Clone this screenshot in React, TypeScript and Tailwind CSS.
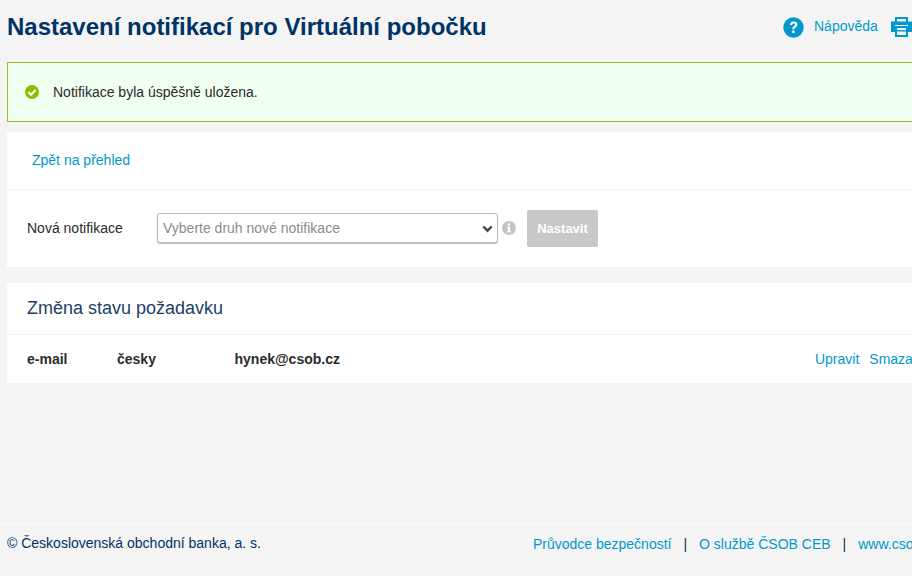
import React from 'react';

const QuestionIcon = () => (
  <svg width="21" height="21" viewBox="0 0 21 21" className="shrink-0">
    <circle cx="10.5" cy="10.5" r="10.2" fill="#0099cc" />
    <path d="M6.9 8c.2-2.3 1.800-3.400 3.800-3.400 2.200 0 3.700 1.200 3.700 3 0 1.400-.8 2.100-1.800 2.800-.8.6-1.100.9-1.100 1.800H9.300c0-1.500.4-2.200 1.400-2.900.8-.6 1.300-1 1.300-1.600 0-.7-.5-1.100-1.300-1.100-.9 0-1.400.5-1.500 1.400z" fill="#fff" />
    <rect x="9.300" y="13.500" width="2.300" height="2.500" fill="#fff" />
  </svg>
);

const PrintIcon = () => (
  <svg width="21" height="20" viewBox="0 0 21 20" className="shrink-0">
    <path d="M4 0h13v5h-2V2H6v3H4z" fill="#0099cc" />
    <path d="M0 4.500h21V15h-4V8H4v7H0z" fill="#0099cc" />
    <path d="M4 9h13v11H4z M6 11v2h9v-2z M6 14.500v3.500h9v-3.500z" fill="#0099cc" fillRule="evenodd" />
  </svg>
);

const CheckIcon = () => (
  <svg width="14" height="14" viewBox="0 0 14 14" className="shrink-0">
    <circle cx="7" cy="7" r="7" fill="#8fbe00" />
    <path d="M3.500 7.200l2.500 2.500 4.500-4.700" fill="none" stroke="#fff" strokeWidth="2" />
  </svg>
);

const Chevron = () => (
  <svg width="11" height="8" viewBox="0 0 11 8" className="absolute right-[5px] top-[12px] pointer-events-none">
    <path d="M1.300 1.500l4.200 4.200 4.200-4.200" fill="none" stroke="#444" strokeWidth="2.400" />
  </svg>
);

const InfoIcon = () => (
  <svg width="14" height="14" viewBox="0 0 14 14" className="shrink-0">
    <circle cx="7" cy="7" r="7" fill="#c4c4c4" />
    <rect x="5.800" y="2.500" width="2.400" height="2.200" fill="#fff" />
    <path d="M4.900 5.800h3.300v4.100h1v1.400H4.900V9.900h1V7.200h-1z" fill="#fff" />
  </svg>
);

const App: React.FC = () => {
  return (
    <div className="w-[912px] h-[576px] overflow-hidden bg-[#f4f4f4] font-['Liberation_Sans',Arial,sans-serif] text-[14px] text-[#2b2b2b]">
      <div className="w-[1000px] h-[576px] flex flex-col">
        <div className="flex-1 pl-[7px]">
          <header className="h-[62px] flex justify-between items-start">
            <h1 className="pt-[12px] text-[24px] leading-[30px] font-bold text-[#003366]">
              Nastavení notifikací pro Virtuální pobočku
            </h1>
            <div className="flex items-center pt-[17px] w-[217px]">
              <QuestionIcon />
              <a className="ml-[10px] -mt-[3px] text-[#0099cc]">Nápověda</a>
              <span className="ml-[13px] -mt-px"><PrintIcon /></span>
            </div>
          </header>

          <div className="h-[60px] flex items-center pl-[17px] border border-[#94c11f] bg-[#f1fff1]">
            <CheckIcon />
            <span className="ml-[14px]">Notifikace byla úspěšně uložena.</span>
          </div>

          <section className="mt-[10px] bg-white">
            <div className="h-[58px] flex items-center pl-[25px] border-b border-[#f4f4f4]">
              <a className="text-[#0099cc]">Zpět na přehled</a>
            </div>
            <div className="h-[77px] flex items-center pl-[20px]">
              <label className="w-[130px]">Nová notifikace</label>
              <div className="relative w-[341px] h-[30px] -mt-px">
                <select
                  defaultValue=""
                  className="appearance-none w-full h-full pl-[5px] bg-white border border-[#bbbbbb] rounded-[3px] shadow-[0_1px_1px_#bbbbbb] text-[#8c8c8c] text-[14px]"
                >
                  <option value="">Vyberte druh nové notifikace</option>
                </select>
                <Chevron />
              </div>
              <span className="ml-[4px] -mt-px"><InfoIcon /></span>
              <button className="ml-[11px] w-[71px] h-[37px] rounded-[2px] bg-[#c8c8c8] text-white text-[13px] font-bold">
                Nastavit
              </button>
            </div>
          </section>

          <section className="mt-[16px] bg-white">
            <h2 className="h-[52px] flex items-center pl-[20px] border-b border-[#f4f4f4] text-[18px] text-[#1a3f66]">
              Změna stavu požadavku
            </h2>
            <div className="h-[48px] flex items-center pl-[20px]">
              <b className="w-[90px]">e-mail</b>
              <b className="w-[117.500px]">česky</b>
              <b>hynek@csob.cz</b>
              <a className="ml-[475px] text-[#0099cc]">Upravit</a>
              <a className="ml-[10px] text-[#0099cc]">Smazat</a>
            </div>
          </section>
        </div>

        <footer className="h-[52px] border-t border-[#fafafa] flex pl-[7px] pt-[8px] text-[#003366]">
          <span>© Československá obchodní banka, a. s.</span>
          <div className="ml-[272px] flex gap-[12px] pt-px">
            <a className="text-[#0099cc]">Průvodce bezpečností</a>
            <span>|</span>
            <a className="text-[#0099cc]">O službě ČSOB CEB</a>
            <span>|</span>
            <a className="text-[#0099cc]">www.csob.cz</a>
          </div>
        </footer>
      </div>
    </div>
  );
};

export default App;
